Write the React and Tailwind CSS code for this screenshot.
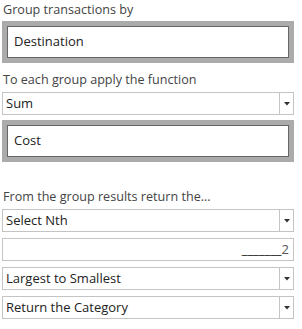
import React from 'react'

const font = { fontFamily: '"Open Sans", "Noto Sans", sans-serif' }

function Label({ children, className = '' }) {
  return <div className={`text-[12.6px] leading-[16px] text-[#444] ${className}`}>{children}</div>
}

function GrayBox({ value }) {
  return (
    <div className="bg-[#ababab] p-[5px]">
      <div className="h-[32px] border border-[#666] bg-white px-[6px] flex items-center text-[13px] text-[#222]">
        {value}
      </div>
    </div>
  )
}

function Select({ value }) {
  return (
    <div className="h-[23px] flex border border-[#c4c4c4] bg-white">
      <div className="flex-1 flex items-center px-[3px] text-[13px] text-[#222]">{value}</div>
      <div className="w-[14px] border-l border-[#c4c4c4] flex items-center justify-center">
        <svg width="6" height="4" viewBox="0 0 6 4"><path d="M0 0h6L3 3.5z" fill="#333" /></svg>
      </div>
    </div>
  )
}

export default function App() {
  return (
    <div className="w-[302px] h-[329px] bg-white pl-[2px] pr-[8px] pt-[2px]" style={font}>
      <Label className="pl-[1px]">Group transactions by</Label>
      <div className="mt-[3px]"><GrayBox value="Destination" /></div>
      <Label className="mt-[9px] pl-[1px]">To each group apply the function</Label>
      <div className="mt-[4px]"><Select value="Sum" /></div>
      <div className="mt-[5px]"><GrayBox value="Cost" /></div>
      <Label className="mt-[27px] pl-[1px]">From the group results return the...</Label>
      <div className="mt-[4px]"><Select value="Select Nth" /></div>
      <div className="mt-[6px] h-[23px] border border-[#c4c4c4] bg-white flex items-center justify-end pr-[4px] text-[13px]">
        <span className="text-[#111]">_______</span><span className="text-[#555]">2</span>
      </div>
      <div className="mt-[6px]"><Select value="Largest to Smallest" /></div>
      <div className="mt-[6px]"><Select value="Return the Category" /></div>
    </div>
  )
}
